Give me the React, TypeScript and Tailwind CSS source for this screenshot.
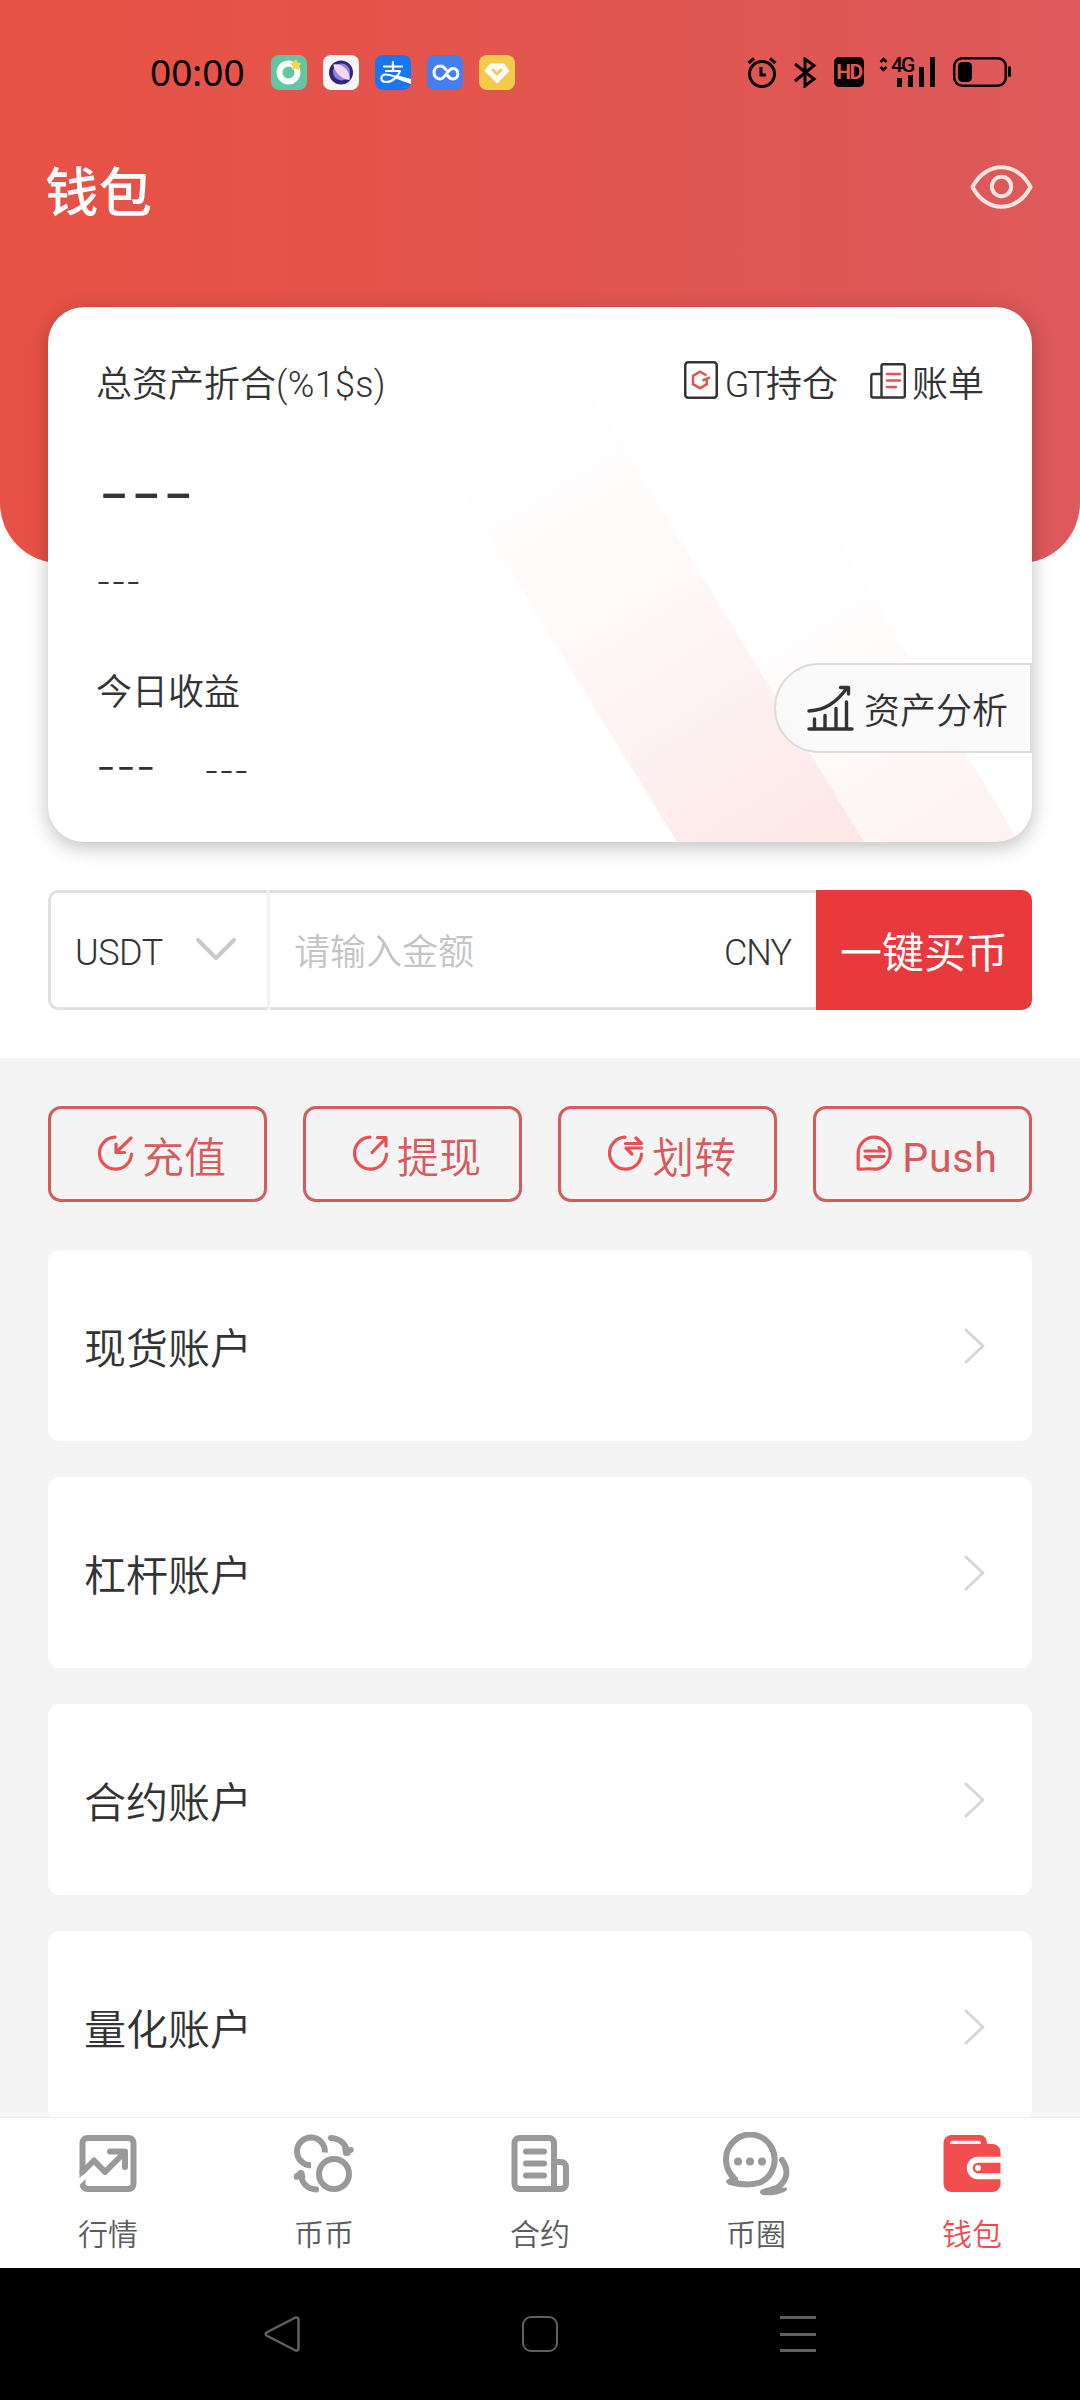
import React from "react";

const strokeProps = {
  fill: "none",
  strokeLinecap: "round" as const,
  strokeLinejoin: "round" as const,
};

function StatusBar() {
  return (
    <div className="flex h-[142px] items-start justify-between pr-[69px] pl-[150px] pt-[55px]">
      <div className="flex items-start">
        <span className="w-[121px] font-['Noto_Sans'] text-[37px] font-normal leading-[34px] text-black">00:00</span>
        <div className="flex gap-4">
          <svg width="36" height="36" viewBox="0 0 36 36">
            <rect width="36" height="35" rx="8" fill="#62c6a2" />
            <circle cx="17.5" cy="17.5" r="9" fill="none" stroke="#fff" strokeWidth="6" />
            <path d="M25 4l1.6 3.6 4 1-3 2.8.6 4-3.6-2-3.8 1.6.6-4-2.4-3.4 4-.4z" fill="#f8d84a" />
          </svg>
          <svg width="36" height="36" viewBox="0 0 36 36">
            <rect width="36" height="35" rx="8" fill="#f8f7fb" />
            <circle cx="18" cy="17.5" r="12" fill="#33257c" />
            <circle cx="18.5" cy="17" r="8.5" fill="#8e83dc" />
            <path d="M10.500 9.500c5-1 9 1 12.500 4.500 3 3.500 4.500 7 3.500 11-4-.5-8-2-11-5.500-3-3-5-6.500-5-10z" fill="#f3d5f4" />
          </svg>
          <svg width="36" height="36" viewBox="0 0 36 36">
            <rect width="36" height="35" rx="8" fill="#1677f2" />
            <g {...strokeProps} stroke="#fff" strokeWidth="2.200">
              <path d="M9 11.500h18M18 7v9M11 16h14c-1.500 5-7.500 11-13.500 11-7 0-6.500-7.500-.5-7.500 6 0 13 4.500 24 7" />
            </g>
            <path d="M21 20l15 4v5l-17-6z" fill="#fff" />
          </svg>
          <svg width="36" height="36" viewBox="0 0 36 36">
            <rect width="36" height="35" rx="8" fill="#437fee" />
            <path d="M19 14.500c-2-2.500-3.500-3.500-5.500-3.500C9.500 11 7 14 7 17.500S9.500 24 13 24c6 0 7-10.500 13-10.500 6.500 0 6.500 10.500 0 10.500-3 0-4.500-2-6-4" {...strokeProps} stroke="#fff" strokeWidth="3" />
          </svg>
          <svg width="36" height="36" viewBox="0 0 36 36">
            <rect width="36" height="35" rx="8" fill="#f2ca4c" />
            <path d="M11 9h14l5 7-12 12L6 16z" fill="#fff" stroke="#fff" strokeWidth="1" strokeLinejoin="round" />
            <path d="M14 15l4 4 4-4" {...strokeProps} stroke="#f2ca4c" strokeWidth="3" />
          </svg>
        </div>
      </div>
      <div className="flex items-start pt-[2px]">
        <svg width="30" height="31" viewBox="0 0 30 31">
          <circle cx="15" cy="17" r="12.500" fill="none" stroke="#000" strokeWidth="3" />
          <path d="M14 10v8h5M1.500 6L7 1.500M28.500 6L23 1.500" fill="none" stroke="#000" strokeWidth="3" />
        </svg>
        <svg className="ml-[17px]" width="23" height="31" viewBox="0 0 23 31">
          <path d="M1 7l19 15-9 7V2l9 6.500L1 24" fill="none" stroke="#000" strokeWidth="3" />
        </svg>
        <span className="ml-[17px] flex h-[30px] w-[30px] items-center justify-center rounded-[5px] bg-black font-['Roboto'] text-[21px] font-bold leading-none tracking-[-1.5px] text-[#df5856]">
          HD
        </span>
        <div className="relative ml-[15px] h-[31px] w-[57px]">
          <svg width="57" height="31" viewBox="0 0 57 31">
            <path d="M1.500 5l3-3 3 3M1.500 10l3 3 3-3" fill="none" stroke="#000" strokeWidth="2.500" />
            <path d="M18 30v-9h5v9zM29 30V18h5v12zM40 30V10h5v20zM51 30V0h5v30z" fill="#000" />
          </svg>
          <span className="absolute left-[12px] top-[-2px] font-['Roboto'] text-[21px] font-medium leading-[20px] tracking-[-2px] text-black">
            4G
          </span>
        </div>
        <svg className="ml-[17px]" width="58" height="31" viewBox="0 0 58 31">
          <rect x="1.250" y="1.250" width="51.500" height="27.500" rx="8" fill="none" stroke="#000" strokeWidth="2.500" />
          <rect x="5" y="5" width="14" height="20" rx="4.500" fill="#000" />
          <rect x="55" y="9" width="3" height="11" rx="1.500" fill="#000" />
        </svg>
      </div>
    </div>
  );
}

function HoldingIcon() {
  return (
    <svg width="34" height="38" viewBox="0 0 34 38">
      <rect x="1.250" y="1.250" width="31.500" height="35.500" rx="3" fill="none" stroke="#333" strokeWidth="2.500" />
      <path d="M22.500 14.500L16 10.700 9 14.800v8.400l7 4 6.800-4v-4.500M18.500 19.500l7.500-3" fill="none" stroke="#df5558" strokeWidth="2.500" />
    </svg>
  );
}

function BillIcon() {
  return (
    <svg width="36" height="36" viewBox="0 0 36 36">
      <g fill="none" stroke="#333" strokeWidth="2.400" strokeLinejoin="round">
        <path d="M11.500 34.500V3a1.700 1.700 0 0 1 1.700-1.700h20A1.700 1.700 0 0 1 34.800 3v29.800a1.700 1.700 0 0 1-1.700 1.700H3a1.700 1.700 0 0 1-1.700-1.700V12.700A1.700 1.700 0 0 1 3 11h8.500" />
      </g>
      <path d="M17 11h13M17 17.500h13M17 24h9" stroke="#df5558" strokeWidth="2.500" strokeLinecap="round" />
    </svg>
  );
}

function AnalysisIcon() {
  return (
    <svg width="47" height="46" viewBox="0 0 47 46">
      <g {...strokeProps} stroke="#333" strokeWidth="3.400">
        <path d="M2 44h43M7.500 43V34M18 43V30.500M29 43V23.500M39.500 43V17M2 26C18 25 29 18 40 3M33.500 2.500h8V9" />
      </g>
    </svg>
  );
}

function AssetCard() {
  return (
    <section className="relative mx-12 mt-[65px] flex h-[535px] flex-col rounded-[36px] bg-white text-[#333] shadow-[0_5px_20px_rgba(0,0,0,0.26)]">
      <svg className="absolute inset-0 rounded-[36px]" width="984" height="535" viewBox="0 0 984 535">
        <defs>
          <linearGradient id="bandA" gradientUnits="userSpaceOnUse" x1="460" y1="110" x2="750" y2="570">
            <stop offset="0" stopColor="#f05050" stopOpacity="0" />
            <stop offset="0.400" stopColor="#f05050" stopOpacity="0.035" />
            <stop offset="1" stopColor="#f05050" stopOpacity="0.14" />
          </linearGradient>
          <linearGradient id="bandB" gradientUnits="userSpaceOnUse" x1="710" y1="220" x2="940" y2="580">
            <stop offset="0" stopColor="#f05050" stopOpacity="0" />
            <stop offset="0.400" stopColor="#f05050" stopOpacity="0.02" />
            <stop offset="1" stopColor="#f05050" stopOpacity="0.085" />
          </linearGradient>
        </defs>
        <path d="M629 535L300 0H490L816 535z" fill="url(#bandA)" />
        <path d="M816 535L600 180H760L971 535z" fill="url(#bandB)" />
      </svg>

      <div className="relative box-content flex h-[50px] items-center justify-between pt-[53px] pr-[48px] pl-[48px]">
        <span className="flex items-center text-[36px] leading-[50px]">
          总资产折合<span className="tracking-[0.3px]">(%1$s)</span>
        </span>
        <div className="flex items-center text-[36px] leading-[50px]">
          <span className="-mt-[10px] mr-[7px]"><HoldingIcon /></span>
          <span><span className="tracking-[-2.500px]">GT</span>持仓</span>
          <span className="-mt-[8px] mr-[6px] ml-[32px]"><BillIcon /></span>
          <span>账单</span>
        </div>
      </div>

      <div className="relative mt-[46px] ml-[50px] h-[72px] font-['Inter'] text-[71px] font-[350] leading-[73px]">---</div>
      <div className="relative mt-[35px] ml-[48px] h-[36px] font-['Inter'] text-[33px] font-[350] leading-[37px]">---</div>
      <div className="relative mt-[69px] ml-[48px] text-[36px] leading-[50px]">今日收益</div>
      <div className="relative mt-[23px] ml-[48px] flex items-baseline font-['Inter'] font-[350] leading-[50px]">
        <span className="w-[108px] text-[44px]">---</span>
        <span className="text-[33px]">---</span>
      </div>

      <button className="absolute top-[356px] right-0 flex h-[90px] w-[258px] items-center rounded-l-full border-2 border-[#dcdcdc] bg-[#f9f9f9]/90 pl-[31px] text-[36px]">
        <AnalysisIcon />
        <span className="mt-[8px] ml-[10px] leading-[50px]">资产分析</span>
      </button>
    </section>
  );
}

function BuyRow() {
  return (
    <div className="mx-12 mt-12 flex h-[120px] text-[36px] text-[#333]">
      <div className="flex w-[219px] items-center rounded-l-[10px] border-[3px] border-r-0 border-[#e0e0e0] pl-[24px]">
        <span className="mt-[5px] w-[120px] tracking-[-0.5px]">USDT</span>
        <svg width="42" height="26" viewBox="0 0 42 26">
          <path d="M3 3l18 18L39 3" {...strokeProps} stroke="#c9c9c9" strokeWidth="4" />
        </svg>
      </div>
      <div className="w-[3px] bg-[#f2f2f2]" />
      <div className="flex flex-1 items-center justify-between border-y-[3px] border-[#e0e0e0] pt-[6px] pr-[25px] pl-[24px]">
        <span className="text-[#c4c4c6]">请输入金额</span>
        <span className="tracking-[-1px]">CNY</span>
      </div>
      <button className="w-[216px] rounded-r-[10px] bg-[#e8393c] pt-[7px] text-[42px] font-normal text-white">一键买币</button>
    </div>
  );
}

const actions = [
  {
    label: "充值",
    icon: <path d="M17 2.200A16 16 0 1 0 33.500 19M33 3L18 17.500M18 9v8.500h8.500" />,
  },
  {
    label: "提现",
    icon: <path d="M17 2.200A16 16 0 1 0 33.500 19M19 17.500L33 3M24.500 2.500H33V11" />,
  },
  {
    label: "划转",
    icon: <path d="M17 2.200A16 16 0 1 0 33.500 19M17.500 8.500H33.500L28 3M33.500 13H18l6 6" />,
  },
  {
    label: "Push",
    icon: <path d="M2.200 33.800V18A16 16 0 1 1 19 34.200c-6-1-10-.2-14.500 0-1.500 0-2.300 0-2.300-.4zM9 16h19l-5-3.500M28 21.500H9l5 3.500" />,
  },
];

const accounts = ["现货账户", "杠杆账户", "合约账户", "量化账户"];

const gray = "#999";

const tabs = [
  {
    label: "行情",
    icon: (
      <svg width="60" height="60" viewBox="0 0 60 60">
        <g {...strokeProps} stroke={gray} strokeWidth="6">
          <rect x="4.500" y="4" width="51" height="51" rx="5" />
          <path d="M-1 50L10 39.500" stroke="#fff" strokeWidth="5" />
          <path d="M4.500 38L16 26.500 27 38 47 18M32 17.500H47V33" />
        </g>
      </svg>
    ),
  },
  {
    label: "币币",
    icon: (
      <svg width="62" height="60" viewBox="0 0 62 60">
        <g fill="none" stroke={gray} strokeWidth="6">
          <path d="M31.800 18.500A13.900 13.900 0 1 0 18 31.300" />
          <circle cx="41" cy="40" r="15" />
          <path d="M38 4c9 .5 15 6 16.500 15M23 55.500C14 55 8.500 49 7.500 39" strokeLinecap="round" />
        </g>
        <path d="M49 14l10-1c2 1 2.500 3 1 5l-7 4c-2 0-3-1-3-3zM12.500 44l-10 2c-2-1-2.500-4-1-6l6-4c2 0 4 1 4 3z" fill={gray} />
      </svg>
    ),
  },
  {
    label: "合约",
    icon: (
      <svg width="60" height="60" viewBox="0 0 60 60">
        <g {...strokeProps} stroke={gray} strokeWidth="6">
          <path d="M44 55H9.500a5 5 0 0 1-5-5V9a5 5 0 0 1 5-5H39a5 5 0 0 1 5 5zM44 28h7a5 5 0 0 1 5 5v17a5 5 0 0 1-5 5h-7" />
          <path d="M16 17.500h18M16 29.500h18M16 41.500h18" />
        </g>
      </svg>
    ),
  },
  {
    label: "币圈",
    icon: (
      <svg width="70" height="64" viewBox="0 0 70 64">
        <g {...strokeProps} stroke={gray} strokeWidth="6">
          <path d="M14 47A24.300 25 0 1 1 39 50.500C29 54 17 52 9 50" />
          <path d="M61 28C68 38 67 48 56 56" />
        </g>
        <path d="M13 42l5 7-2 4-10-2c-1.500-1-1.500-3 1-3.500zM52 54l7-2-1 4 7-.5c2 .5 1 3-1 4-7 3.500-15 4.500-22 3.500-4-1-4-5 0-6z" fill={gray} />
        <circle cx="17" cy="29.500" r="4" fill={gray} />
        <circle cx="29" cy="29.500" r="4" fill={gray} />
        <circle cx="41" cy="29.500" r="4" fill={gray} />
      </svg>
    ),
  },
  {
    label: "钱包",
    active: true,
    icon: (
      <svg width="60" height="60" viewBox="0 0 60 60">
        <path d="M9 1h29c4 0 7 3 7 9h5.500a8 8 0 0 1 8 8v32a8 8 0 0 1-8 8H9.500a8 8 0 0 1-8-8V9A8 8 0 0 1 9 1z" fill="#f24e50" />
        <path d="M10.500 6.800h26c1.500 0 2.500 1 2.500 3.200H8c0-2 1-3.200 2.500-3.200z" fill="#fff" />
        <path d="M60 25.800H36a8.200 8.200 0 0 0 0 16.400h24" fill="none" stroke="#fff" strokeWidth="6" />
        <circle cx="36" cy="34" r="3" fill="#fff" />
      </svg>
    ),
  },
];

export default function App() {
  return (
    <div className="flex h-[2400px] w-[1080px] flex-col overflow-hidden bg-[#f4f4f4] font-['Roboto','Noto_Sans_CJK_SC',sans-serif] font-[350]">
      <div className="h-[1058px] shrink-0 bg-white">
        <header className="h-[563px] rounded-b-[60px] bg-linear-to-r from-[#e85145] via-[#e2554e] to-[#dd595b]">
          <StatusBar />
          <div className="flex h-[100px] items-center justify-between pr-[47px] pl-[45px]">
            <h1 className="mt-[4px] text-[53.5px] font-medium leading-[80px] text-white">钱包</h1>
            <svg className="-mt-[10px]" width="63" height="44" viewBox="0 0 63 44">
              <g {...strokeProps} stroke="#f6e4e2" strokeWidth="4">
                <path d="M2.500 22C16-4.300 47-4.300 60.500 22 47 48.300 16 48.300 2.500 22z" />
                <circle cx="31.500" cy="21.500" r="9.700" />
              </g>
            </svg>
          </div>
          <AssetCard />
        </header>
        <div className="h-[279px]" />
        <BuyRow />
      </div>

      <main className="flex min-h-0 flex-1 flex-col overflow-hidden px-12 pt-12">
        <div className="grid shrink-0 grid-cols-4 gap-9">
          {actions.map((a) => (
            <button key={a.label} className="flex h-24 items-center justify-center gap-[8px] rounded-[13px] border-[3px] border-[#d75b5e] pl-[9px] text-[42px] text-[#d75b5e]">
              <svg className="-mt-[2px]" width="36" height="36" viewBox="0 0 36 36">
                <g {...strokeProps} stroke="#e95053" strokeWidth="3.200">{a.icon}</g>
              </svg>
              <span className={a.label === "Push" ? "mt-[8px] pl-[2px] text-[41px] leading-[60px] font-[375] tracking-[0.8px]" : "mt-[9px] leading-[60px]"}>{a.label}</span>
            </button>
          ))}
        </div>
        <div className="mt-12 flex flex-col gap-9">
          {accounts.map((name) => (
            <div key={name} className="flex h-[191px] shrink-0 items-center justify-between rounded-xl bg-white pr-[45px] pl-9 text-[42px] text-[#333]">
              <span className="mt-[7px]">{name}</span>
              <svg width="24" height="38" viewBox="0 0 24 38">
                <path d="M3 3l17 16L3 35" {...strokeProps} stroke="#d6d6d6" strokeWidth="3" />
              </svg>
            </div>
          ))}
        </div>
      </main>

      <nav className="grid h-[151px] shrink-0 grid-cols-5 border-t border-[#ececec] bg-white">
        {tabs.map((t) => (
          <div key={t.label} className="flex flex-col items-center pt-[15px]">
            <div className="flex h-[62px] items-center">{t.icon}</div>
            <span className={t.active ? "mt-[18px] text-[30px] leading-[44px] text-[#f04c4f]" : "mt-[18px] text-[30px] leading-[44px] text-[#5c5c5c]"}>{t.label}</span>
          </div>
        ))}
      </nav>

      <div className="flex h-[132px] shrink-0 items-center justify-between bg-black pr-[264px] pl-[264px]">
        <svg width="36" height="36" viewBox="0 0 36 36">
          <path d="M31.500 1.500L2.500 16.500q-1.500 1.500 0 3l29 15q3 .5 3-2V3.500q0-2.500-3-2z" fill="none" stroke="#606060" strokeWidth="2.500" strokeLinejoin="round" />
        </svg>
        <div className="h-9 w-9 rounded-[9px] border-[2.500px] border-[#606060]" />
        <div className="flex h-9 w-9 flex-col justify-between">
          <div className="h-[3px] bg-[#606060]" />
          <div className="h-[3px] bg-[#606060]" />
          <div className="h-[3px] bg-[#606060]" />
        </div>
      </div>
    </div>
  );
}
